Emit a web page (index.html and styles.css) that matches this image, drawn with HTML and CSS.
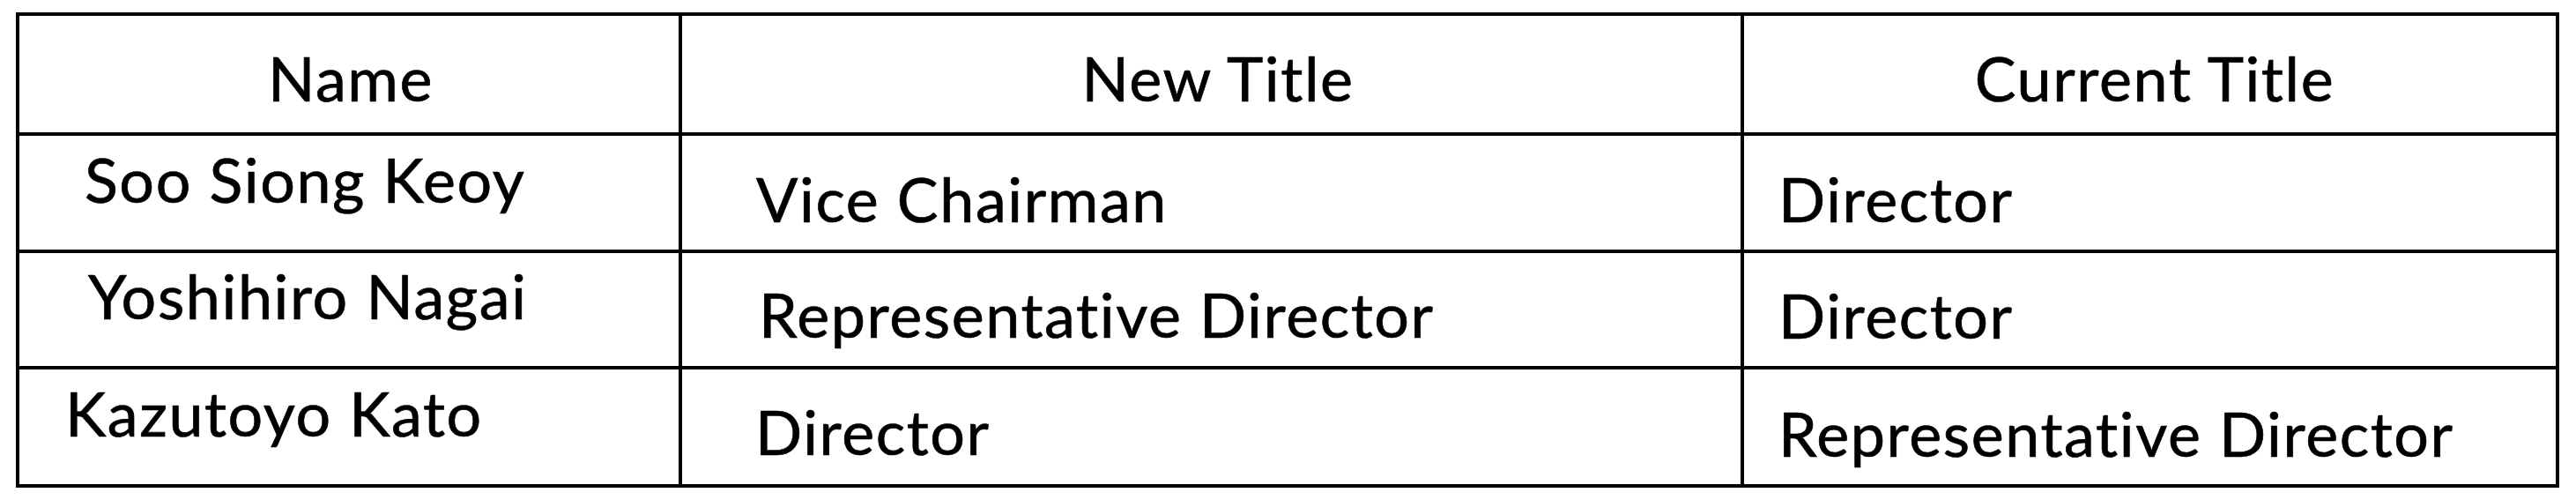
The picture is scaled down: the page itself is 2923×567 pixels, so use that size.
FILE: index.html
```html
<!DOCTYPE html>
<html lang="en">
<head>
<meta charset="utf-8">
<title>Title changes</title>
<link rel="stylesheet" href="styles.css">
</head>
<body>
<div class="table">
  <div class="cell head head-name">Name</div>
  <div class="cell head head-new">New Title</div>
  <div class="cell head head-cur">Current Title</div>

  <div class="cell name r2">Soo Siong Keoy</div>
  <div class="cell newt r2">Vice Chairman</div>
  <div class="cell curt r2">Director</div>

  <div class="cell name r3">Yoshihiro Nagai</div>
  <div class="cell newt r3">Representative Director</div>
  <div class="cell curt r3">Director</div>

  <div class="cell name r4">Kazutoyo Kato</div>
  <div class="cell newt r4">Director</div>
  <div class="cell curt r4">Representative Director</div>
</div>
</body>
</html>
```
FILE: styles.css
```css
html, body {
  margin: 0;
  padding: 0;
  background: #ffffff;
}

body {
  font-family: "Lato", "Carlito", "Liberation Sans", sans-serif;
  color: #000000;
}

.table {
  display: grid;
  grid-template-columns: 748px 1201px 921px;
  grid-template-rows: 132px 129px 128px 130px;
  gap: 4px;
  padding: 4px;
  background: #000000;
  width: max-content;
  margin: 14px 0 0 18px;
}

.cell {
  background: #ffffff;
  font-size: 70px;
  line-height: 70px;
  letter-spacing: 1.6px;
  -webkit-text-stroke: 0.7px #000000;
  white-space: nowrap;
  box-sizing: border-box;
}

.head {
  text-align: center;
  padding-top: 35px;
}

.head-name { padding-left: 4px; }
.head-new { padding-left: 15px; }
.head-cur { padding-left: 11px; }

.name { padding-top: 14px; }
.newt, .curt { padding-top: 36px; }

.name.r2 { padding-left: 74px; }
.name.r3 { padding-left: 78px; padding-top: 13px; }
.name.r4 { padding-left: 52px; padding-top: 14px; }

.newt.r2 { padding-left: 84px; }
.newt.r3 { padding-left: 87px; padding-top: 34px; }
.newt.r4 { padding-left: 83px; padding-top: 35px; }

.curt { padding-left: 39px; }
.curt.r3 { padding-top: 35px; }
.curt.r4 { padding-top: 37px; }
```
